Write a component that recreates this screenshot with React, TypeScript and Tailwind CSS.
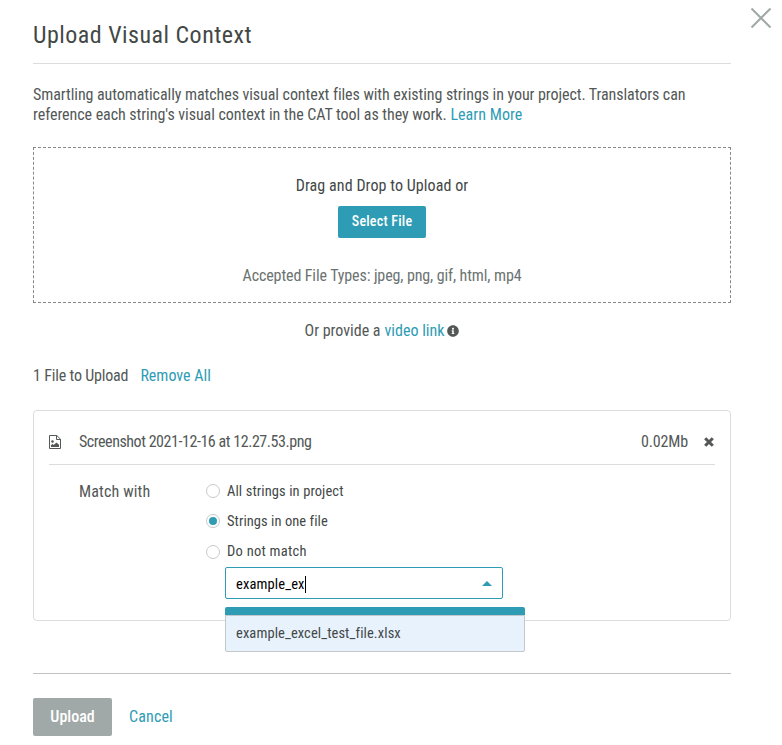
import React, { useState } from 'react';
import { FaInfoCircle } from 'react-icons/fa';

const options = [
  {
    id: 'all',
    label: 'All strings in project',
    radio: 'mt-[3px]',
    tracking: 'tracking-[0.09px]',
  },
  {
    id: 'one',
    label: 'Strings in one file',
    radio: 'mt-[3px]',
    tracking: 'tracking-[0.05px]',
  },
  {
    id: 'none',
    label: 'Do not match',
    radio: 'mt-1',
    tracking: 'tracking-[0.25px]',
  },
];

const App: React.FC = () => {
  const [match, setMatch] = useState('one');

  return (
    <div className="relative h-[745px] w-[782px] overflow-hidden bg-white px-[33px] font-['Roboto_Condensed',Roboto,sans-serif] text-[16px] leading-5 text-[#535857]">
      {/* Close button */}
      <button className="absolute top-[7px] right-[10px]" aria-label="Close">
        <svg
          className="size-[22px]"
          viewBox="0 0 22 22"
          fill="none"
          stroke="#a0a9a7"
          strokeWidth={2}
        >
          <path d="M1.5 1.5l19 19M20.5 1.5l-19 19" />
        </svg>
      </button>

      <div className="w-[698px]">
        {/* Header */}
        <div className="h-16 border-b border-[#dadddc] pt-[19px]">
          <h1 className="text-[24px] leading-8 tracking-[0.48px] text-[#434847]">
            Upload Visual Context
          </h1>
        </div>
        <p className="pt-[21px] whitespace-nowrap">
          <span className="tracking-[-0.065px]">
            Smartling automatically matches visual context files with existing
            strings in your project. Translators can
          </span>
          <br />
          <span className="tracking-[-0.05px]">
            reference each string's visual context in the CAT tool as they work.
          </span>{' '}
          <a className="tracking-[0.06px] text-[#2e9cb5]">Learn More</a>
        </p>

        {/* Drop zone */}
        <div className="mt-[22px] flex h-[156px] flex-col items-center border border-dashed border-[#858988] pt-7">
          <div className="tracking-[0.08px] text-[#434847]">
            Drag and Drop to Upload or
          </div>
          <button className="mt-[10px] h-8 w-[88px] rounded-xs bg-[#2e9cb5] pb-0.5 text-[14px] font-medium tracking-[0.22px] text-white">
            Select File
          </button>
          <div className="mt-7 tracking-[-0.11px] text-[#6b7371]">
            Accepted File Types: jpeg, png, gif, html, mp4
          </div>
        </div>
        <div className="mt-[18px] flex items-center justify-center">
          <span>Or provide a</span>
          <a className="ml-1 text-[#2e9cb5]">video link</a>
          <FaInfoCircle className="ml-[3px] size-3" />
        </div>

        {/* File list */}
        <div className="mt-[25px] flex gap-3">
          <span className="tracking-[-0.18px]">1 File to Upload</span>
          <a className="text-[#2e9cb5]">Remove All</a>
        </div>
        <div className="mt-6 h-[211px] rounded-[4px] border border-[#dadddc] px-[15px]">
          <div className="flex h-[54px] items-center border-b border-[#dadddc] pt-[9px]">
            <svg
              className="h-[14px] w-3"
              viewBox="0 0 12 14"
              fill="none"
              stroke="#535857"
            >
              <path d="M.5.5h7.3l3.7 3.7v9.3H.5zM7.5.5v4h4" />
              <circle cx="3.5" cy="6.5" r="1.3" fill="#535857" stroke="none" />
              <path
                d="M2 12v-1.8l1.5-1.4 1.2 1.1 2.8-2.4L10 9.8V12z"
                fill="#535857"
                stroke="none"
              />
            </svg>
            <span className="ml-[18px] tracking-[-0.45px]">
              Screenshot 2021-12-16 at 12.27.53.png
            </span>
            <span className="ml-auto tracking-[-0.15px]">0.02Mb</span>
            <svg
              className="mr-px ml-4 size-[10px]"
              viewBox="0 0 10 10"
              stroke="#535857"
              strokeWidth={3}
            >
              <path d="M1.2 1.2l7.6 7.6M8.8 1.2L1.2 8.8" />
            </svg>
          </div>
          <div className="flex pl-[30px]">
            <div className="w-[127px] pt-[17px] tracking-[0.15px]">
              Match with
            </div>
            <div className="pt-4 text-[14.5px] text-[#434847]">
              {options.map((option) => (
                <div
                  key={option.id}
                  className="flex h-[30px] cursor-pointer items-start"
                  onClick={() => setMatch(option.id)}
                >
                  <span
                    className={`flex size-[14px] items-center justify-center rounded-full border border-[#c6cac9] ${option.radio}`}
                  >
                    {match === option.id && (
                      <span className="size-2 rounded-full bg-[#2e9cb5]" />
                    )}
                  </span>
                  <span className={`ml-[7px] pt-px ${option.tracking}`}>
                    {option.label}
                  </span>
                </div>
              ))}
              <div className="relative -mt-1 ml-[19px]">
                <div className="flex h-8 w-[278px] items-center rounded-xs border border-[#2e9cb5] pt-1 pr-[10px] pl-[10px] text-black">
                  <span className="tracking-[0.12px]">example_ex</span>
                  <span className="mb-px h-[17px] w-px bg-black" />
                  <svg
                    className="mb-[3px] ml-auto h-[5px] w-[10px]"
                    viewBox="0 0 10 5"
                    fill="#2e9cb5"
                  >
                    <path d="M0 5l5-5 5 5z" />
                  </svg>
                </div>
                {/* Suggestions */}
                <div className="absolute top-10 left-0 w-[300px]">
                  <div className="h-2 rounded-t-xs bg-[#2e9cb5]" />
                  <div className="flex h-[37px] items-center rounded-b-xs border border-[#c3c8ca] bg-[#e7f2fd] pt-px pl-[10px] tracking-[0.09px]">
                    example_excel_test_file.xlsx
                  </div>
                </div>
              </div>
            </div>
          </div>
        </div>

        {/* Footer */}
        <div className="mt-[52px] flex items-center gap-[17px] border-t border-[#bfc3c2] pt-6">
          <button className="h-[38px] w-[79px] rounded-xs bg-[#a0a9a7] font-medium text-white">
            Upload
          </button>
          <a className="tracking-[0.15px] text-[#2e9cb5]">Cancel</a>
        </div>
      </div>
    </div>
  );
};

export default App;
